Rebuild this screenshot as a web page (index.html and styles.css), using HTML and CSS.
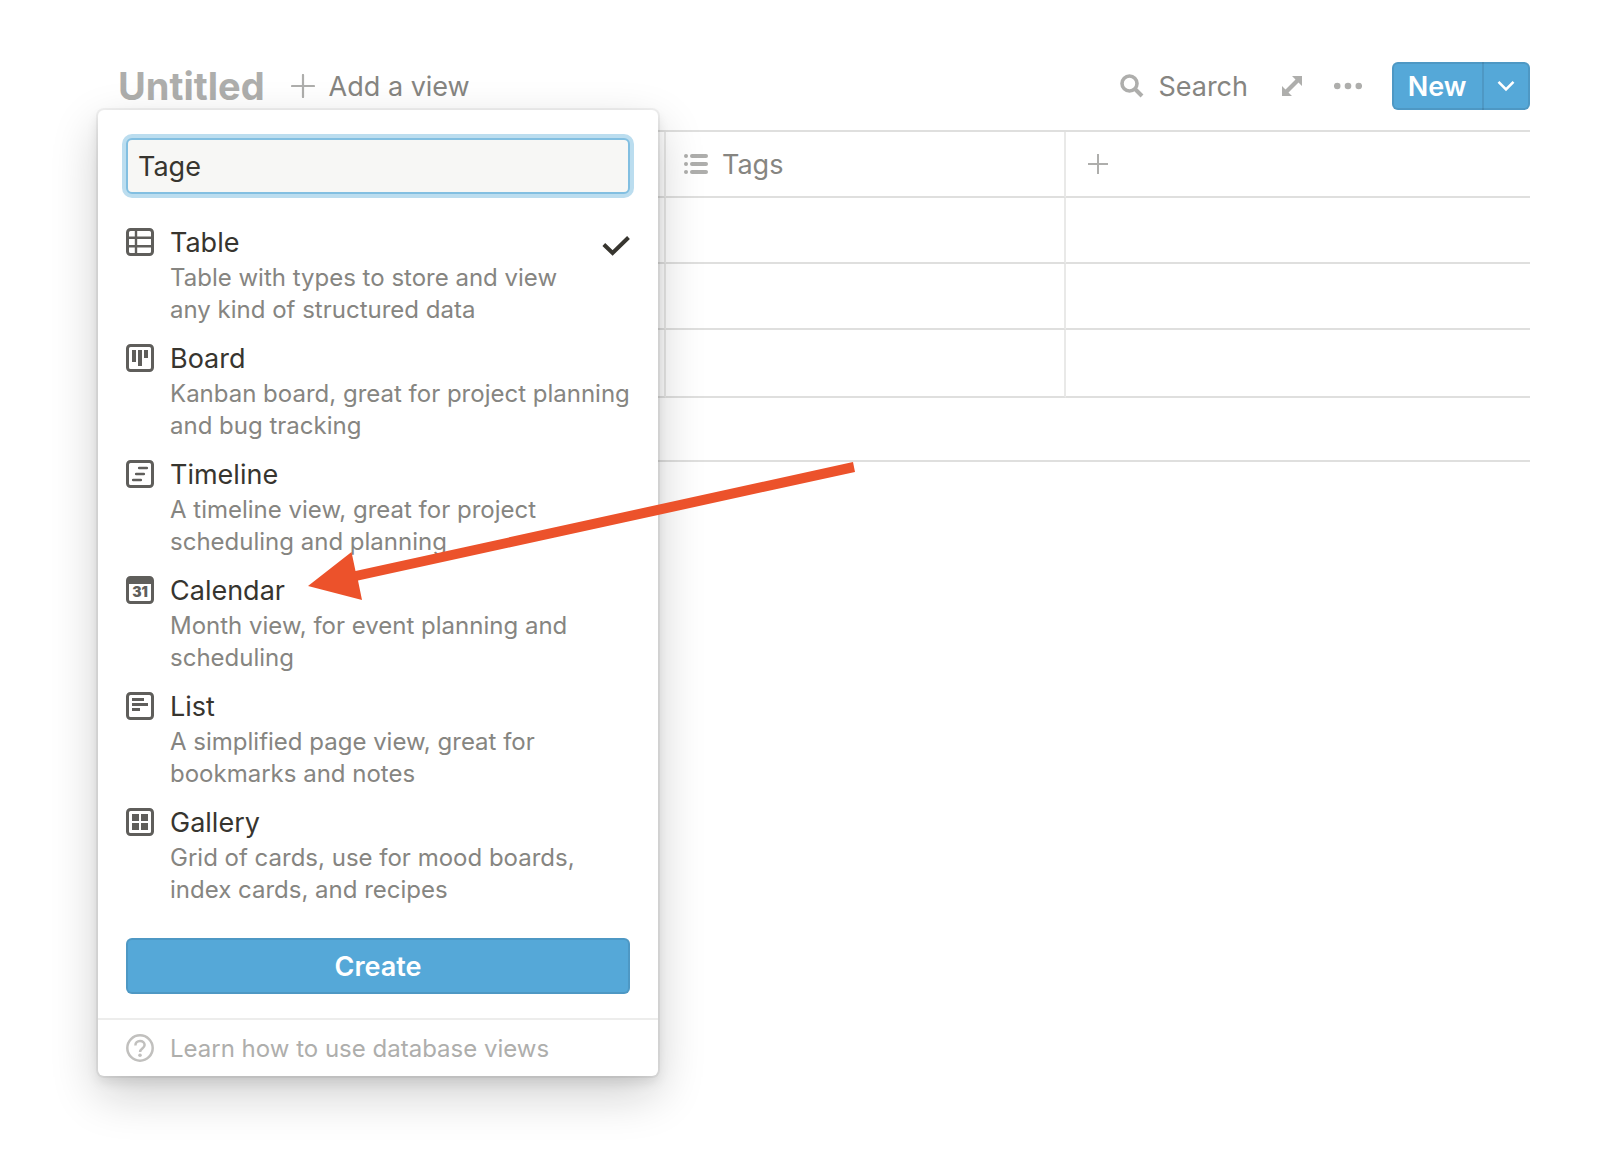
FILE: index.html
```html
<!DOCTYPE html>
<html lang="en">
<head>
<meta charset="utf-8">
<title>Untitled database</title>
<link rel="stylesheet" href="styles.css">
</head>
<body>
<main class="page">
  <header class="toolbar">
    <h1 class="title">Untitled</h1>
    <button class="tool add-view" type="button">
      <svg width="24" height="24" viewBox="0 0 24 24" aria-hidden="true"><path d="M12 1v22M1 12h22" stroke="#aeaeac" stroke-width="2.200" stroke-linecap="round"/></svg>
      <span>Add a view</span>
    </button>
    <div class="tools">
      <button class="tool search" type="button">
        <svg width="24" height="24" viewBox="0 0 24 24" aria-hidden="true"><circle cx="9.500" cy="9.500" r="7.500" fill="none" stroke="#aeaeac" stroke-width="3.600"/><path d="M14.500 14.500L22 22" stroke="#aeaeac" stroke-width="4"/></svg>
        <span>Search</span>
      </button>
      <button class="tool expand" type="button" aria-label="Open as page">
        <svg width="20" height="20" viewBox="0 0 20 20" aria-hidden="true"><path d="M10 0h10v10l-3.500-3.500L6.500 16.500 10 20H0V10l3.500 3.500L13.500 3.500z" fill="#aeaeac"/></svg>
      </button>
      <button class="tool more" type="button" aria-label="More">
        <svg width="28" height="8" viewBox="0 0 28 8" aria-hidden="true"><g fill="#aeaeac"><circle cx="3.200" cy="4" r="3.300"/><circle cx="14" cy="4" r="3.300"/><circle cx="24.800" cy="4" r="3.300"/></g></svg>
      </button>
      <div class="split">
        <button class="new" type="button">New</button>
        <button class="new-menu" type="button" aria-label="New options">
          <svg width="18" height="12" viewBox="0 0 18 12" aria-hidden="true"><path d="M1.500 1.800L9 9.300l7.500-7.500" fill="none" stroke="#fff" stroke-width="2.600"/></svg>
        </button>
      </div>
    </div>
  </header>

  <table class="grid">
    <colgroup><col class="col-name"><col class="col-tags"><col></colgroup>
    <thead>
      <tr>
        <th scope="col"></th>
        <th scope="col">
          <span class="head">
            <svg width="24" height="22" viewBox="0 0 24 22" aria-hidden="true"><g fill="#aeaeac"><circle cx="2" cy="3" r="2"/><circle cx="2" cy="11" r="2"/><circle cx="2" cy="19" r="2"/><rect x="6" y="1" width="18" height="4" rx="2"/><rect x="6" y="9" width="18" height="4" rx="2"/><rect x="6" y="17" width="18" height="4" rx="2"/></g></svg>
            Tags
          </span>
        </th>
        <th scope="col">
          <button class="add-column" type="button" aria-label="Add a property">
            <svg width="20" height="22" viewBox="0 0 20 22" aria-hidden="true"><path d="M10 1v20M0 11h20" stroke="#aeaeac" stroke-width="2"/></svg>
          </button>
        </th>
      </tr>
    </thead>
    <tbody>
      <tr><td></td><td></td><td></td></tr>
      <tr><td></td><td></td><td></td></tr>
      <tr><td></td><td></td><td></td></tr>
    </tbody>
    <tfoot>
      <tr><td colspan="3"></td></tr>
    </tfoot>
  </table>

  <section class="popover" aria-label="Add a view">
    <form class="form">
      <input class="name" type="text" value="Tage" aria-label="View name">
      <div class="views">
        <button class="view" type="button" aria-pressed="true">
          <svg class="icon" viewBox="0 0 28 28" aria-hidden="true"><g fill="none" stroke="#5f5e5b"><rect x="1.500" y="1.500" width="25" height="25" rx="3" stroke-width="3"/><path d="M2 9.800h24M2 18.200h24M10 2v24" stroke-width="2.400"/></g></svg>
          <span class="text"><span class="label">Table</span><span class="desc">Table with types to store and view<br>any kind of structured data</span></span>
          <svg class="check" width="28" height="20" viewBox="0 0 28 20" aria-hidden="true"><path d="M1.800 8.500L10.600 17 26.500 1.500" fill="none" stroke="#37352f" stroke-width="4"/></svg>
        </button>
        <button class="view" type="button">
          <svg class="icon" viewBox="0 0 28 28" aria-hidden="true"><rect x="1.500" y="1.500" width="25" height="25" rx="3" fill="none" stroke="#5f5e5b" stroke-width="3"/><path d="M6 6h4v12H6zM12 6h4v16h-4zM18 6h4v8h-4z" fill="#5f5e5b"/></svg>
          <span class="text"><span class="label">Board</span><span class="desc">Kanban board, great for project planning<br>and bug tracking</span></span>
        </button>
        <button class="view" type="button">
          <svg class="icon" viewBox="0 0 28 28" aria-hidden="true"><g fill="none" stroke="#5f5e5b"><rect x="1.500" y="1.500" width="25" height="25" rx="3" stroke-width="3"/><path d="M13.200 8h7.600M10.200 14h7.600M7.200 20h7.600" stroke-width="2.600" stroke-linecap="round"/></g></svg>
          <span class="text"><span class="label">Timeline</span><span class="desc">A timeline view, great for project<br>scheduling and planning</span></span>
        </button>
        <button class="view" type="button">
          <svg class="icon" viewBox="0 0 28 28" aria-hidden="true"><rect x="1.500" y="1.500" width="25" height="25" rx="3" fill="none" stroke="#5f5e5b" stroke-width="3"/><path d="M2 2h24v6H2z" fill="#5f5e5b"/><text class="day" x="14" y="21" text-anchor="middle">31</text></svg>
          <span class="text"><span class="label">Calendar</span><span class="desc">Month view, for event planning and<br>scheduling</span></span>
        </button>
        <button class="view" type="button">
          <svg class="icon" viewBox="0 0 28 28" aria-hidden="true"><rect x="1.500" y="1.500" width="25" height="25" rx="3" fill="none" stroke="#5f5e5b" stroke-width="3"/><path d="M6 6h12v3H6zM6 11h16v3H6zM6 16h8v3H6z" fill="#5f5e5b"/></svg>
          <span class="text"><span class="label">List</span><span class="desc">A simplified page view, great for<br>bookmarks and notes</span></span>
        </button>
        <button class="view" type="button">
          <svg class="icon" viewBox="0 0 28 28" aria-hidden="true"><rect x="1.500" y="1.500" width="25" height="25" rx="3" fill="none" stroke="#5f5e5b" stroke-width="3"/><path d="M6 6h7v7H6zM15 6h7v7h-7zM6 15h7v7H6zM15 15h7v7h-7z" fill="#5f5e5b"/></svg>
          <span class="text"><span class="label">Gallery</span><span class="desc">Grid of cards, use for mood boards,<br>index cards, and recipes</span></span>
        </button>
      </div>
      <button class="create" type="button">Create</button>
    </form>
    <a class="learn" href="#">
      <svg class="icon" viewBox="0 0 28 28" aria-hidden="true"><g fill="none" stroke="#c1c0be"><circle cx="14" cy="14" r="12.700" stroke-width="2.500"/><path d="M9.400 11.400c0-2.700 1.900-4.400 4.600-4.400s4.600 1.700 4.600 4.100c0 3.500-4.500 3.500-4.500 6.900" stroke-width="2.500"/></g><circle cx="14" cy="21.300" r="1.800" fill="#c1c0be"/></svg>
      Learn how to use database views
    </a>
  </section>

  <svg class="arrow" width="548" height="140" viewBox="0 0 548 140" aria-hidden="true"><path d="M0 126L43.500 92 47.500 111 545 2 547 12 50 120.500 54 140z" fill="#ec522b"/></svg>
</main>
</body>
</html>
```
FILE: styles.css
```css
* {
  box-sizing: border-box;
}

body {
  margin: 0;
  background: #fff;
  color: #37352f;
  font-family: Inter, "Liberation Sans", sans-serif;
  font-size: 27px;
}

button,
input {
  margin: 0;
  padding: 0;
  border: 0;
  background: none;
  color: inherit;
  font: inherit;
}

svg {
  display: block;
  flex: none;
}

.page {
  position: relative;
  min-height: 100vh;
  padding: 62px 82px 62px 118px;
}

.toolbar {
  display: flex;
  align-items: center;
  height: 48px;
  margin-bottom: 20px;
}

.title {
  margin: 0;
  color: #aeaeac;
  font-size: 38px;
  font-weight: 700;
}

.tool {
  display: flex;
  align-items: center;
  gap: 14px;
  color: #868581;
}

.add-view {
  margin-left: 26px;
}

.tools {
  display: flex;
  align-items: center;
  margin-left: auto;
}

.expand {
  margin-left: 34px;
}

.more {
  margin: 0 30px 0 32px;
}

.split {
  display: flex;
  width: 138px;
  height: 48px;
  border-radius: 6px;
  background: #55a8d8;
  box-shadow: inset 0 0 0 2px rgba(15, 15, 15, .1);
  color: #fff;
}

.new {
  width: 92px;
  border-right: 2px solid rgba(15, 15, 15, .1);
  font-weight: 600;
}

.new-menu {
  display: flex;
  flex: 1;
  align-items: center;
  justify-content: center;
  padding-right: 2px;
}

.grid {
  width: 100%;
  border-top: 2px solid #dfdfde;
  border-spacing: 0;
  table-layout: fixed;
}

.col-name {
  width: 548px;
}

.col-tags {
  width: 400px;
}

.grid th,
.grid td {
  height: 66px;
  padding: 0 18px;
  border-right: 2px solid #e9e9e8;
  border-bottom: 2px solid #dfdfde;
  font-weight: 400;
  text-align: left;
}

.grid th:last-child,
.grid td:last-child {
  border-right: 0;
  padding-left: 22px;
}

.grid tbody tr:last-child td {
  height: 68px;
}

.grid tfoot td {
  height: 64px;
}

.head {
  display: flex;
  align-items: center;
  gap: 14px;
  color: #868581;
}

.add-column {
  display: flex;
}

.popover {
  position: absolute;
  top: 110px;
  left: 98px;
  width: 560px;
  border-radius: 6px;
  background: #fff;
  box-shadow:
    0 0 0 2px rgba(15, 15, 15, .05),
    0 6px 12px rgba(15, 15, 15, .1),
    0 18px 48px rgba(15, 15, 15, .2);
}

.form {
  padding: 28px 28px 24px;
}

.name {
  display: block;
  width: 100%;
  height: 56px;
  padding: 0 10px;
  border: 2px solid #82bfe1;
  border-radius: 6px;
  outline: 0;
  background: #f7f7f5;
  box-shadow: 0 0 0 4px #bbddef;
}

.views {
  display: flex;
  flex-direction: column;
  margin: 22px 0 26px;
}

.view {
  display: flex;
  align-items: flex-start;
  gap: 16px;
  padding: 6px 0;
  text-align: left;
}

.icon {
  width: 28px;
  height: 28px;
}

.view .icon {
  margin-top: 6px;
}

.day {
  fill: #5f5e5b;
  font-size: 14px;
  font-weight: 900;
}

.text {
  display: flex;
  flex: 1;
  flex-direction: column;
  min-width: 0;
  white-space: nowrap;
}

.label {
  height: 40px;
  line-height: 42px;
}

.desc {
  color: #868581;
  font-size: 24px;
  line-height: 32px;
}

.check {
  margin-top: 14px;
}

.create {
  display: block;
  width: 100%;
  height: 56px;
  border-radius: 6px;
  background: #55a8d8;
  box-shadow: inset 0 0 0 2px rgba(15, 15, 15, .1);
  color: #fff;
  font-weight: 600;
}

.learn {
  display: flex;
  align-items: center;
  gap: 16px;
  height: 58px;
  padding: 0 28px;
  border-top: 2px solid #ededec;
  color: #aeaeac;
  font-size: 24px;
  text-decoration: none;
}

.arrow {
  position: absolute;
  top: 460px;
  left: 308px;
  pointer-events: none;
}
```
